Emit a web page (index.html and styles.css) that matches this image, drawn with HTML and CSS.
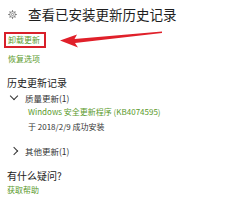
FILE: index.html
```html
<!DOCTYPE html>
<html lang="zh">
<head>
<meta charset="utf-8">
<link rel="stylesheet" href="styles.css">
</head>
<body>
<div class="page">
  <div class="header">
    <svg class="gear" viewBox="0 0 16 16" width="9" height="9">
      <g fill="none" stroke="#666" stroke-width="1.2">
        <circle cx="8" cy="8" r="5"/>
        <circle cx="8" cy="8" r="2"/>
      </g>
      <g stroke="#666" stroke-width="1.8">
        <line x1="8" y1="0.5" x2="8" y2="3"/>
        <line x1="8" y1="13" x2="8" y2="15.5"/>
        <line x1="0.5" y1="8" x2="3" y2="8"/>
        <line x1="13" y1="8" x2="15.5" y2="8"/>
        <line x1="2.7" y1="2.7" x2="4.4" y2="4.4"/>
        <line x1="11.6" y1="11.6" x2="13.3" y2="13.3"/>
        <line x1="13.3" y1="2.7" x2="11.6" y2="4.4"/>
        <line x1="2.7" y1="13.3" x2="4.4" y2="11.6"/>
      </g>
    </svg>
    <h1 class="title">查看已安装更新历史记录</h1>
  </div>
  <div class="uninstall"><span class="link">卸载更新</span></div>
  <div class="link recover">恢复选项</div>
  <h2 class="section">历史更新记录</h2>
  <div class="group"><span class="chev down"></span><span>质量更新(1)</span></div>
  <div class="item link">Windows 安全更新程序 (KB4074595)</div>
  <div class="item date">于 2018/2/9 成功安装</div>
  <div class="group other"><span class="chev right"></span><span>其他更新(1)</span></div>
  <h2 class="section ask">有什么疑问?</h2>
  <div class="link help">获取帮助</div>
</div>
<svg class="arrow" viewBox="0 0 248 211" width="248" height="211">
  <polygon points="60,40.5 77,34.5 74.5,39 162,31.5 162,33 75,43 78,47.5" fill="#e0202a"/>
</svg>
</body>
</html>
```
FILE: styles.css
```css
html, body {
  margin: 0;
  padding: 0;
  background: #fff;
}
body {
  width: 248px;
  height: 211px;
  overflow: hidden;
  position: relative;
  font-family: "Noto Sans CJK SC", "Noto Sans", sans-serif;
  color: #222;
}
.page {
  padding-left: 7px;
}
.header {
  display: flex;
  align-items: center;
  height: 28px;
  padding-left: 1px;
}
.gear {
  flex: none;
}
.title {
  margin: 0 0 0 11px;
  font-size: 13.5px;
  font-weight: 400;
  line-height: 20px;
  color: #1e1e1e;
}
.uninstall {
  margin-top: 4px;
  margin-left: -3px;
  width: 36px;
  height: 12px;
  border: 2px solid #d8202a;
  padding-left: 2px;
  display: flex;
  align-items: center;
}
.link {
  color: #5b9a2c;
  font-size: 8px;
  line-height: 12px;
}
.recover {
  margin-top: 5px;
  line-height: 12px;
  padding-left: 1px;
}
.section {
  margin: 11px 0 0;
  font-size: 10px;
  font-weight: 400;
  line-height: 14px;
  color: #222;
}
.group {
  display: flex;
  align-items: center;
  height: 15px;
  font-size: 8.5px;
  color: #333;
}
.chev {
  display: inline-block;
  width: 5px;
  height: 5px;
  border-right: 1px solid #333;
  border-bottom: 1px solid #333;
}
.chev.down {
  transform: rotate(45deg);
  margin-left: 4px;
  margin-right: 8px;
  margin-top: -3px;
}
.chev.right {
  transform: rotate(-45deg);
  margin-left: 4px;
  margin-right: 8px;
}
.item {
  padding-left: 21px;
  font-size: 8px;
  line-height: 14px;
}
.item.date {
  line-height: 16px;
  color: #333;
}
.other {
  margin-top: 8px;
}
.ask {
  margin-top: 11px;
}
.help {
  line-height: 14px;
}
.arrow {
  position: absolute;
  left: 0;
  top: 0;
  pointer-events: none;
}
```
